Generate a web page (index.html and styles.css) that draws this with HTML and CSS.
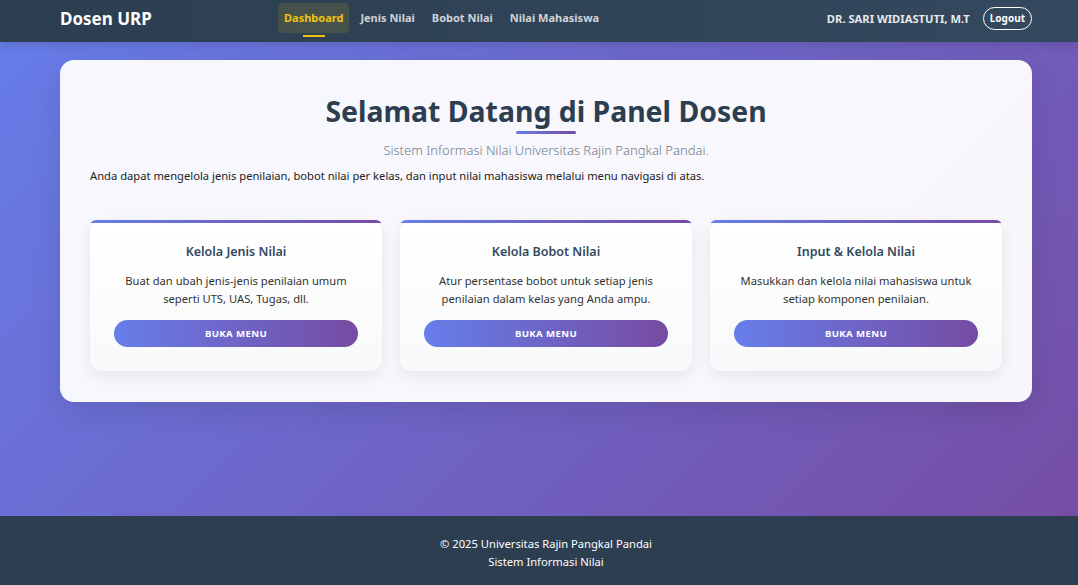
FILE: index.html
```html
<!DOCTYPE html>
<html lang="id">
<head>
<meta charset="utf-8">
<title>Dosen URP</title>
<link rel="stylesheet" href="styles.css">
</head>
<body>
<nav class="navbar">
  <div class="nav-inner">
    <div class="brand">Dosen URP</div>
    <ul class="menu">
      <li><a class="menu-link active">Dashboard</a></li>
      <li><a class="menu-link">Jenis Nilai</a></li>
      <li><a class="menu-link">Bobot Nilai</a></li>
      <li><a class="menu-link">Nilai Mahasiswa</a></li>
    </ul>
    <div class="user">
      <span class="user-name">DR. SARI WIDIASTUTI, M.T</span>
      <a class="logout">Logout</a>
    </div>
  </div>
</nav>
<main class="main">
  <section class="panel">
    <h1 class="title">Selamat Datang di Panel Dosen</h1>
    <p class="subtitle">Sistem Informasi Nilai Universitas Rajin Pangkal Pandai.</p>
    <p class="intro">Anda dapat mengelola jenis penilaian, bobot nilai per kelas, dan input nilai mahasiswa melalui menu navigasi di atas.</p>
    <div class="cards">
      <div class="card">
        <h3 class="card-title">Kelola Jenis Nilai</h3>
        <p class="card-text">Buat dan ubah jenis-jenis penilaian umum seperti UTS, UAS, Tugas, dll.</p>
        <a class="btn">Buka Menu</a>
      </div>
      <div class="card">
        <h3 class="card-title">Kelola Bobot Nilai</h3>
        <p class="card-text">Atur persentase bobot untuk setiap jenis penilaian dalam kelas yang Anda ampu.</p>
        <a class="btn">Buka Menu</a>
      </div>
      <div class="card">
        <h3 class="card-title">Input &amp; Kelola Nilai</h3>
        <p class="card-text">Masukkan dan kelola nilai mahasiswa untuk setiap komponen penilaian.</p>
        <a class="btn">Buka Menu</a>
      </div>
    </div>
  </section>
</main>
<footer class="footer">
  <p>&copy; 2025 Universitas Rajin Pangkal Pandai</p>
  <p>Sistem Informasi Nilai</p>
</footer>
</body>
</html>
```

FILE: styles.css
```css
* { box-sizing: border-box; }
html, body { margin: 0; padding: 0; }
body {
  font-family: "Noto Sans", "Open Sans", sans-serif;
  min-height: 585px;
  display: flex;
  flex-direction: column;
  background: linear-gradient(135deg, #667eea 0%, #764ba2 100%);
}
.navbar {
  height: 42px;
  background: linear-gradient(90deg, #2c3e50, #34495e);
  box-shadow: 0 2px 10px rgba(0,0,0,0.15);
}
.nav-inner {
  height: 36px;
  display: flex;
  align-items: center;
  padding: 0 46px 0 60px;
}
.brand {
  color: #fff;
  font-weight: 700;
  font-size: 17px;
  width: 218px;
}
.menu {
  list-style: none;
  margin: 0;
  padding: 0;
  display: flex;
  gap: 5px;
  align-items: center;
  flex: 1;
}
.menu-link {
  display: block;
  position: relative;
  padding: 0 6px;
  height: 30px;
  line-height: 30px;
  font-size: 11px;
  font-weight: 700;
  color: #cfd3d8;
  border-radius: 4px;
}
.menu-link.active {
  color: #f1c40f;
  background: rgba(241,196,15,0.12);
}
.menu-link.active::after {
  content: "";
  position: absolute;
  left: 50%;
  bottom: -4px;
  width: 22px;
  margin-left: -11px;
  height: 2px;
  background: #f1c40f;
}
.user { display: flex; align-items: center; gap: 13px; }
.user-name { color: #e6e8eb; font-size: 11.2px; font-weight: 700; }
.logout {
  color: #fff;
  font-size: 10px;
  font-weight: 700;
  border: 1px solid #fff;
  border-radius: 12px;
  padding: 3px 6px;
  line-height: 15px;
}
.main {
  flex: 1;
  padding: 18px 46px 114px 60px;
}
.panel {
  background: rgba(255,255,255,0.95);
  border-radius: 14px;
  box-shadow: 0 10px 30px rgba(0,0,0,0.1);
  padding: 29px 30px 31px 30px;
}
.title {
  margin: 0;
  text-align: center;
  font-size: 28.4px;
  font-weight: 700;
  color: #2c3e50;
  line-height: 44px;
  position: relative;
  padding-bottom: 5px;
}
.title::after {
  content: "";
  position: absolute;
  left: 50%;
  margin-left: -30px;
  bottom: 4px;
  width: 60px;
  height: 3px;
  border-radius: 2px;
  background: linear-gradient(90deg, #667eea, #764ba2);
}
.subtitle {
  margin: 2px 0 0;
  text-align: center;
  color: #6f7d8a;
  font-size: 13px;
  font-weight: 300;
  line-height: 20px;
}
.intro {
  margin: 7px 0 0;
  font-size: 11.2px;
  color: #222;
  line-height: 18px;
}
.cards {
  margin-top: 35px;
  display: grid;
  grid-template-columns: repeat(3, 1fr);
  gap: 18px;
}
.card {
  background: linear-gradient(180deg, #ffffff, #f8f9fa);
  border-radius: 12px;
  border-top: 3px solid transparent;
  box-shadow: 0 5px 15px rgba(0,0,0,0.08);
  padding: 19px 24px 24px;
  text-align: center;
  position: relative;
}
.card::before {
  content: "";
  position: absolute;
  left: 0; right: 0; top: -3px;
  height: 6px;
  border-radius: 12px 12px 0 0;
  background: linear-gradient(90deg, #667eea, #764ba2);
  clip-path: inset(0 0 3px 0);
}
.card-title {
  margin: 0;
  font-size: 12.5px;
  font-weight: 600;
  color: #34495e;
  line-height: 20px;
}
.card-text {
  margin: 10px 0 12px;
  font-size: 11.2px;
  color: #333;
  line-height: 18px;
}
.btn {
  display: block;
  height: 27px;
  line-height: 27px;
  border-radius: 14px;
  color: #fff;
  font-size: 9.6px;
  font-weight: 700;
  letter-spacing: 0.4px;
  text-transform: uppercase;
  background: linear-gradient(90deg, #667eea, #764ba2);
}
.footer {
  background: #2c3e50;
  height: 69px;
  padding: 19px 46px 0 60px;
  text-align: center;
  color: #fff;
}
.footer p { margin: 0; font-size: 11.2px; line-height: 18px; }
```
